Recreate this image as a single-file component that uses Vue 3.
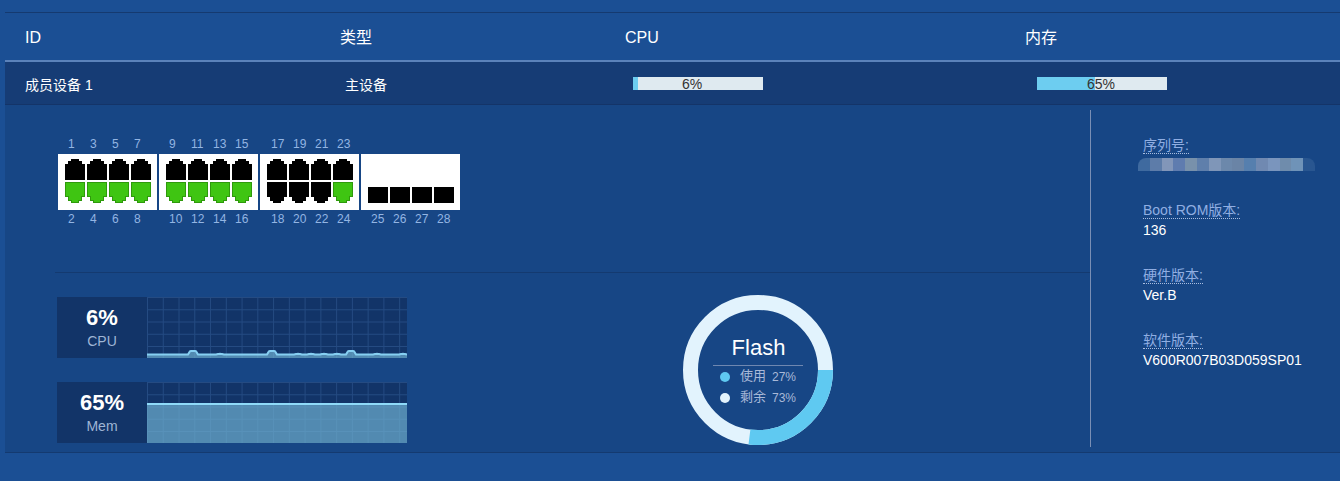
<script setup>
const W = 260
const H = 61
const vLines = Array.from({ length: 17 }, (_, i) => +(0.5 + i * 15.76).toFixed(2))
const hLines = Array.from({ length: 6 }, (_, i) => +(0.5 + i * 12.25).toFixed(2))

const portGroups = [
  { pad: 10, top: ['1', '3', '5', '7'], bottom: ['2', '4', '6', '8'], topOn: [0, 0, 0, 0], botOn: [1, 1, 1, 1] },
  { pad: 10, top: ['9', '11', '13', '15'], bottom: ['10', '12', '14', '16'], topOn: [0, 0, 0, 0], botOn: [1, 1, 1, 1] },
  { pad: 11, top: ['17', '19', '21', '23'], bottom: ['18', '20', '22', '24'], topOn: [0, 0, 0, 0], botOn: [0, 0, 0, 1] }
]
const fiber = ['25', '26', '27', '28']

const spikes = [46, 125, 204]
const bumps = [73, 151, 164, 177, 190, 230, 256]
const BASE = 57.5
function cpuY(x) {
  let y = BASE
  for (const s of spikes) {
    const d = Math.abs(x - s)
    if (d < 5) y = Math.min(y, BASE - Math.min(3.6, (5 - d) * 1.6))
  }
  for (const b of bumps) {
    const d = Math.abs(x - b)
    if (d < 4) y = Math.min(y, BASE - (4 - d) * 0.2)
  }
  return +y.toFixed(2)
}
const cpuPts = Array.from({ length: W + 1 }, (_, x) => `${x},${cpuY(x)}`).join(' ')
const cpuFill = `0,${H} ${cpuPts} ${W},${H}`

const R = 67.5
const C = 2 * Math.PI * R
const usedDash = `${(C * 0.27).toFixed(2)} ${C.toFixed(2)}`

const mosaic = ['#3f6a9f', '#5d7ca9', '#8296b9', '#5f7caf', '#7891ab', '#5f7fab', '#7f96b8', '#6c88ab', '#6a84a6', '#567fae', '#7089b1', '#7a95bd', '#6f8cac', '#6f93b8', '#295690']

const info = [
  { label: '序列号:', blur: true },
  { label: 'Boot ROM版本:', value: '136' },
  { label: '硬件版本:', value: 'Ver.B' },
  { label: '软件版本:', value: 'V600R007B03D059SP01' }
]
</script>

<template>
  <div class="page">
    <div class="table">
      <div class="head">
        <span class="h-id">ID</span>
        <span class="h-type">类型</span>
        <span class="h-cpu">CPU</span>
        <span>内存</span>
      </div>
      <div class="row">
        <span class="r-id">成员设备 1</span>
        <span class="r-type">主设备</span>
        <div class="bar r-cpu"><i class="fill fill-cpu"></i><b class="pct-cpu">6%</b></div>
        <div class="bar"><i class="fill fill-mem"></i><b class="pct-mem">65%</b></div>
      </div>
      <div class="detail">
        <div class="main">
          <div class="ports">
            <div v-for="g in portGroups" :key="g.top[0]" class="group">
              <div class="nums nums-top" :style="{ paddingLeft: g.pad + 'px' }">
                <span v-for="n in g.top" :key="n">{{ n }}</span>
              </div>
              <div class="panel">
                <div class="port-row">
                  <svg v-for="(on, i) in g.topOn" :key="i" class="port" width="20" height="21" viewBox="0 0 20 21" shape-rendering="crispEdges">
                    <path d="M6 0H14V2H17V5H20V21H0V5H3V2H6Z" fill="#000" />
                  </svg>
                </div>
                <div class="port-row">
                  <svg v-for="(on, i) in g.botOn" :key="i" class="port" width="20" height="21" viewBox="0 0 20 21" shape-rendering="crispEdges">
                    <path v-if="on" d="M0 0H20V15H17V19H14V21H6V19H3V15H0Z" fill="#2f9a0c" />
                    <path v-if="on" d="M1 1H19V14H16V18H13V20H7V18H4V14H1Z" fill="#3fc512" />
                    <path v-else d="M0 0H20V15H17V19H14V21H6V19H3V15H0Z" fill="#000" />
                  </svg>
                </div>
              </div>
              <div class="nums nums-bottom" :style="{ paddingLeft: g.pad + 'px' }">
                <span v-for="n in g.bottom" :key="n">{{ n }}</span>
              </div>
            </div>
            <div class="group">
              <div class="nums nums-top"><span>&nbsp;</span></div>
              <div class="panel panel-fiber">
                <i v-for="n in fiber" :key="n" class="sfp"></i>
              </div>
              <div class="nums nums-bottom nums-fiber">
                <span v-for="n in fiber" :key="n">{{ n }}</span>
              </div>
            </div>
          </div>

          <div class="lower">
            <div class="charts">
              <div class="stat">
                <div class="stat-box"><strong>6%</strong><span>CPU</span></div>
                <svg class="chart" :width="W" :height="H" :viewBox="`0 0 ${W} ${H}`">
                  <rect :width="W" :height="H" fill="#123468" />
                  <line v-for="x in vLines" :key="'v' + x" :x1="x" :x2="x" y1="0" :y2="H" class="grid" />
                  <line v-for="y in hLines" :key="'h' + y" x1="0" :x2="W" :y1="y" :y2="y" class="grid" />
                  <polygon :points="cpuFill" fill="#6dafd0" fill-opacity="0.7" />
                  <polyline :points="cpuPts" fill="none" stroke="#86cff2" stroke-width="2" />
                </svg>
              </div>
              <div class="stat">
                <div class="stat-box"><strong>65%</strong><span>Mem</span></div>
                <svg class="chart" :width="W" :height="H" :viewBox="`0 0 ${W} ${H}`">
                  <rect :width="W" :height="H" fill="#123468" />
                  <line v-for="x in vLines" :key="'v' + x" :x1="x" :x2="x" y1="0" :y2="H" class="grid" />
                  <line v-for="y in hLines" :key="'h' + y" x1="0" :x2="W" :y1="y" :y2="y" class="grid" />
                  <rect x="0" y="22" :width="W" height="39" fill="#6dafd0" fill-opacity="0.7" />
                  <rect x="0" y="21" :width="W" height="2" fill="#8fdaf9" />
                </svg>
              </div>
            </div>

            <div class="donut">
              <svg width="150" height="150" viewBox="0 0 150 150">
                <circle cx="75" cy="75" :r="R" fill="none" stroke="#e2f3fd" stroke-width="15" />
                <circle cx="75" cy="75" :r="R" fill="none" stroke="#5fc9f1" stroke-width="15" :stroke-dasharray="usedDash" />
              </svg>
              <div class="donut-text">
                <div class="donut-title">Flash</div>
                <div class="legend"><i class="dot dot-used"></i><span class="lg-name">使用</span><span class="lg-val">27%</span></div>
                <div class="legend"><i class="dot dot-free"></i><span class="lg-name">剩余</span><span class="lg-val">73%</span></div>
              </div>
            </div>
          </div>
        </div>

        <div class="side">
          <div v-for="item in info" :key="item.label" class="info">
            <div class="info-line"><span class="info-label">{{ item.label }}</span></div>
            <div v-if="item.blur" class="mosaic">
              <i v-for="(c, i) in mosaic" :key="i" :style="{ background: c }"></i>
            </div>
            <div v-else class="info-value">{{ item.value }}</div>
          </div>
        </div>
      </div>
    </div>
  </div>
</template>

<style>
html, body { margin: 0; background: #1b4f94; }
</style>

<style scoped>
.page {
  width: 1340px;
  height: 481px;
  overflow: hidden;
  box-sizing: border-box;
  padding: 12px 0 0 5px;
  background: #1b4f94;
  font-family: "Liberation Sans", "Noto Sans CJK SC", sans-serif;
  color: #fff;
}
.table { border-top: 1px solid #153a70; }
.head {
  display: flex;
  align-items: baseline;
  box-sizing: border-box;
  height: 49px;
  padding: 14px 0 0 20px;
  font-size: 16px;
  line-height: 22px;
  border-bottom: 2px solid #5b82ba;
}
.h-id { width: 315px; }
.h-type { width: 285px; }
.h-cpu { width: 400px; }
.row {
  display: flex;
  align-items: center;
  height: 43px;
  box-sizing: border-box;
  padding: 2px 0 0 20px;
  font-size: 14px;
  background: #163c75;
  border-bottom: 1px solid #143468;
}
.r-id { width: 320px; }
.r-type { width: 288px; }
.r-cpu { margin-right: 274px; }
.bar {
  position: relative;
  width: 130px;
  height: 13px;
  background: #dfeaf0;
  margin-top: -1px;
}
.fill { position: absolute; left: 0; top: 0; bottom: 0; background: #6dcdf0; }
.fill-cpu { width: 5px; }
.fill-mem { width: 58px; }
.bar b {
  position: absolute;
  inset: 0;
  text-align: center;
  font-weight: 400;
  font-size: 14px;
  line-height: 14px;
  color: #333;
}
.pct-cpu { padding-right: 12px; }
.pct-mem { padding-right: 2px; }
.detail {
  display: flex;
  height: 348px;
  box-sizing: border-box;
  background: #174685;
  border-bottom: 1px solid #143a70;
}
.main { width: 1085px; flex: none; }
.ports {
  display: flex;
  height: 135px;
  padding: 32px 0 0 53px;
  box-sizing: content-box;
}
.group { width: 101px; }
.nums {
  display: flex;
  height: 14px;
  font-size: 12px;
  line-height: 14px;
  color: #93b5e3;
}
.nums span { width: 22px; flex: none; }
.nums-top { padding-left: 10px; margin-bottom: 3px; }
.nums-bottom { padding-left: 10px; margin-top: 2px; }
.nums-fiber { padding-left: 10px; }
.panel {
  box-sizing: border-box;
  width: 99px;
  height: 56px;
  padding: 5px 0 0 7px;
  background: #fff;
  display: flex;
  flex-direction: column;
  gap: 2px;
}
.port-row { display: flex; gap: 2px; height: 21px; }
.port { display: block; flex: none; }
.panel-fiber {
  flex-direction: row;
  align-items: flex-end;
  padding: 0 0 7px 7px;
}
.sfp { width: 20px; height: 16px; background: #000; flex: none; }
.lower {
  display: flex;
  margin-left: 50px;
  padding: 24px 0 0 2px;
  border-top: 1px solid #143a70;
}
.charts {
  width: 350px;
  flex: none;
  display: flex;
  flex-direction: column;
  gap: 24px;
}
.stat { display: flex; height: 61px; }
.stat-box {
  width: 90px;
  background: #123468;
  display: flex;
  flex-direction: column;
  align-items: center;
}
.stat-box strong {
  font-size: 22px;
  line-height: 25px;
  margin-top: 8px;
  font-weight: 700;
  color: #fff;
}
.stat-box span {
  font-size: 14px;
  line-height: 16px;
  margin-top: 3px;
  color: #9fb5d5;
}
.chart { display: block; flex: none; }
.grid { stroke: #254b82; stroke-width: 1; }
.donut {
  position: relative;
  width: 150px;
  height: 150px;
  margin: -2px 0 0 276px;
  flex: none;
}
.donut svg { display: block; }
.donut-text {
  position: absolute;
  left: 30px;
  top: 38px;
  width: 90px;
}
.donut-title {
  box-sizing: border-box;
  height: 33px;
  line-height: 30px;
  font-size: 22px;
  text-align: center;
  padding-left: 1px;
  border-bottom: 1px solid #6f87b0;
}
.legend {
  display: flex;
  align-items: center;
  height: 21px;
  padding-left: 7px;
  color: #a9b9d8;
}
.dot { width: 10px; height: 10px; border-radius: 50%; flex: none; margin-right: 10px; }
.dot-used { background: #5fc9f1; }
.dot-free { background: #e2f3fd; }
.lg-name { font-size: 13px; line-height: 14px; margin: 0 6px 1px 0; }
.lg-val { font-size: 12px; line-height: 14px; }
.side {
  flex: none;
  width: 249px;
  height: 337px;
  box-sizing: border-box;
  margin-top: 5px;
  padding: 27px 0 0 52px;
  border-left: 1px solid #7a8fb5;
}
.info { height: 65px; font-size: 14px; }
.info-line { height: 18px; }
.info-label {
  display: inline-block;
  line-height: 15px;
  color: #90aee2;
  border-bottom: 1px dotted #a9bde0;
}
.info-value { line-height: 20px; height: 20px; color: #fff; }
.mosaic {
  display: flex;
  width: 177px;
  height: 13px;
  margin: 3px 0 0 -5px;
  overflow: hidden;
  border-radius: 8px 8px 0 0;
}
.mosaic i { flex: 1; }
</style>
